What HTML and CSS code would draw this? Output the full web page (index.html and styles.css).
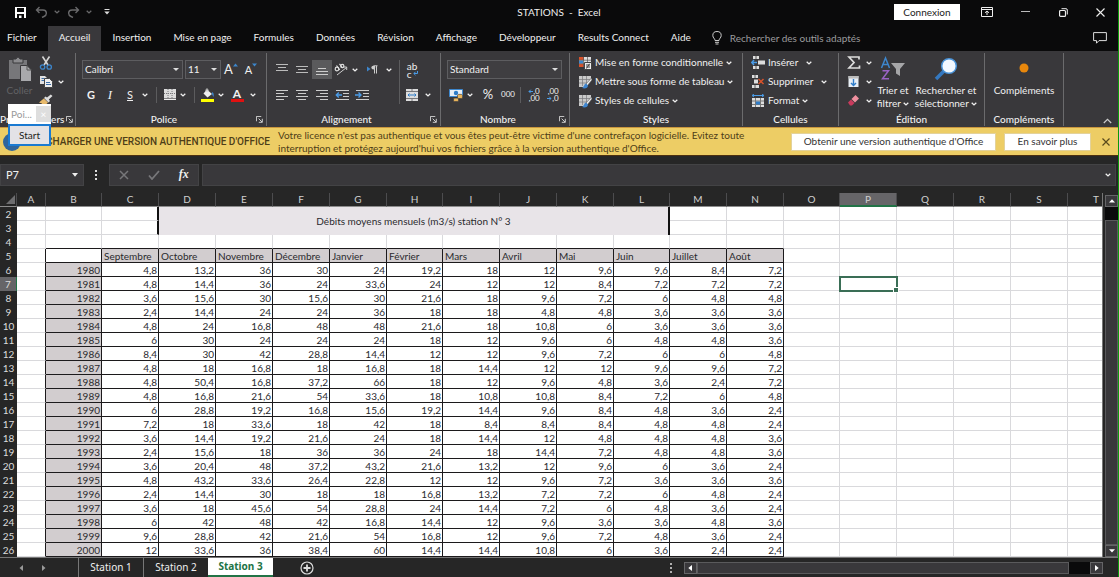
FILE: index.html
```html
<!DOCTYPE html>
<html lang="fr">
<head>
<meta charset="utf-8">
<title>STATIONS - Excel</title>
<link rel="stylesheet" href="styles.css">
</head>
<body>
<svg class="defs" aria-hidden="true">
  <symbol id="chev" viewBox="0 0 6 4"><path d="M.7 .7 3 2.9 5.3 .7" fill="none" stroke="currentColor" stroke-width="1.3"/></symbol>
  <symbol id="launch" viewBox="0 0 8 8"><path d="M.5 6V.5H6M3 3l4 4M7.2 3.2v4H3.2" fill="none" stroke="#e0e0e0"/></symbol>
  <symbol id="brushcell" viewBox="0 0 14 14"><path d="M1 1h12v3L7 12H1z" fill="#c9c9c9"/><path d="M1 4.500h11M1 8h8M4.500 1v10M8.500 1v8" stroke="#77777a" stroke-width=".7"/><path d="M13.500 3 8 9l1.500 1.500L14 5z" fill="#eee" stroke="#444" stroke-width=".5"/><path d="M8 8.500c-2 .5-1.500 3-4 4.500 3 1 6 0 6-2.500z" fill="#3f86d0"/></symbol>
</svg>
<div class="app">
  <header class="titlebar">
    <div class="quick">
      <button class="b w20" aria-label="Enregistrer"><svg width="13" height="13" viewBox="0 0 13 13"><path d="M1 1h11v11H1z" fill="#fff"/><path d="M3 2h7v4H3zM3 8h7v4H3z" fill="#0a0a0b"/><path d="M5 9.500h2.500V12H5z" fill="#fff"/></svg></button>
      <button class="b w24 dim" aria-label="Annuler"><svg width="13" height="12" viewBox="0 0 13 12"><path d="M4.500 1 1.500 4l3 3M1.500 4H8c4 0 4.500 5 1 6.500L7 11.500" fill="none" stroke="currentColor" stroke-width="1.400"/></svg></button>
      <button class="b w10 dim" aria-label="Options d'annulation"><svg class="chev"><use href="#chev"/></svg></button>
      <button class="b w24 dim" aria-label="Rétablir"><svg width="13" height="12" viewBox="0 0 13 12"><path d="M8.500 1l3 3-3 3M11.500 4H5C1 4 .5 9 4 10.500l2 1" fill="none" stroke="currentColor" stroke-width="1.400"/></svg></button>
      <button class="b w10 dim" aria-label="Options de rétablissement"><svg class="chev"><use href="#chev"/></svg></button>
      <button class="b w26" aria-label="Personnaliser"><svg width="6" height="6" viewBox="0 0 6 6"><path d="M.5 .5h5" stroke="#ddd"/><path d="M.3 2.500h5.400L3 5.500z" fill="#ddd"/></svg></button>
    </div>
    <div class="doc">STATIONS&nbsp; -&nbsp; Excel</div>
    <div class="win">
      <button class="connect">Connexion</button>
      <button class="b w38" aria-label="Affichage du ruban"><svg width="12" height="10" viewBox="0 0 12 10"><path d="M.5 .5h11v9H.5zM.5 2.500h11M6 8V4M4 5.800 6 4l2 1.800" fill="none" stroke="#eee"/></svg></button>
      <button class="b w38" aria-label="Réduire"><svg width="9" height="2"><path d="M0 .5h9" stroke="#bbb"/></svg></button>
      <button class="b w38" aria-label="Restaurer"><svg width="9" height="9" viewBox="0 0 9 9"><rect x=".6" y="2.500" width="5.900" height="5.900" rx="1" fill="none" stroke="#eee" stroke-width="1.200"/><path d="M2.500 .7h4.500q1.300 0 1.300 1.300v4.500" fill="none" stroke="#eee"/></svg></button>
      <button class="b w36" aria-label="Fermer"><svg width="9" height="9" viewBox="0 0 9 9"><path d="M.5.5l8 8M8.500.5l-8 8" stroke="#eee" stroke-width="1.100"/></svg></button>
    </div>
  </header>

  <nav class="tabs">
    <button>Fichier</button><button class="on">Accueil</button><button>Insertion</button><button>Mise en page</button><button>Formules</button><button>Données</button><button>Révision</button><button>Affichage</button><button>Développeur</button><button>Results Connect</button><button>Aide</button>
    <label class="tell"><svg width="10" height="14" viewBox="0 0 10 14"><path d="M3 9.500C3 7.500 .8 7 .8 4.500a4.200 4 0 0 1 8.400 0C9.200 7 7 7.500 7 9.500zM3 11.300h4M3.500 13h3" fill="none" stroke="#ccc"/></svg><input type="text" placeholder="Rechercher des outils adaptés"></label>
    <button class="comment" aria-label="Commentaires"><svg width="14" height="12" viewBox="0 0 14 12"><path d="M.6 .6h12.800v8H6L3.500 11.200V8.600H.6z" fill="none" stroke="#ddd"/></svg></button>
  </nav>

  <div class="ribbon">
    <section class="group g-clip">
      <div class="body">
        <button class="big paste"><svg width="24" height="26" viewBox="0 0 24 26"><path d="M1 4h18v19H1z" fill="#77777a"/><path d="M5 3h3q2-4 4 0h3v4H5z" fill="#8b8b8e" stroke="#39383b"/><path d="M12.500 9.500H19L23.500 14v11.500h-11z" fill="#a9a9ac" stroke="#39383b"/><path d="M19 9.500V14h4.500" fill="none" stroke="#555"/></svg><span>Coller</span></button>
        <div class="stack">
          <button class="item" aria-label="Couper"><svg width="14" height="14" viewBox="0 0 14 14"><path d="M3.500 .5 9 9M10.500 .5 5 9" stroke="#d6d6d6" stroke-width="1.600"/><circle cx="3.600" cy="11" r="2.200" fill="none" stroke="#3d86cc" stroke-width="1.300"/><circle cx="10.200" cy="11" r="2.200" fill="none" stroke="#3d86cc" stroke-width="1.300"/></svg></button>
          <button class="item" aria-label="Copier"><svg width="14" height="13" viewBox="0 0 14 13"><path d="M1 1h5l2 2v6H1z" fill="#e2e2e2"/><path d="M2.500 3.500h3M2.500 5.500h3" stroke="#3d6ea8"/><path d="M5.500 3.500h5l3 3v6h-8z" fill="#eee" stroke="#444"/><path d="M7 7.500h4M7 9.500h5" stroke="#3d6ea8"/></svg><svg class="chev"><use href="#chev"/></svg></button>
          <button class="item" aria-label="Reproduire la mise en forme"><svg width="14" height="13" viewBox="0 0 14 13"><path d="M13.500 2 11.800 .4 8 3.500 6.500 2.500 5 4l4.500 4.500L11 7 9.800 5.500z" fill="#ddd"/><path d="M4.800 4.500 0 8.500l3 1-.5 2L5 12.500l4-4z" fill="#e8ba6c"/></svg></button>
        </div>
      </div>
      <div class="cap"><span>Presse-papiers</span><button class="lb" aria-label="Options"><svg width="7" height="7"><use href="#launch"/></svg></button></div>
    </section>

    <section class="group g-font">
      <div class="body rows">
        <div class="row">
          <span class="sel s-font"><select aria-label="Police"><option>Calibri</option></select></span>
          <span class="sel s-size"><select aria-label="Taille"><option>11</option></select></span>
          <button class="b w20 grow" aria-label="Agrandir la police"><span>A</span><svg width="5" height="4"><path d="M0 3.500 2.500 .5 5 3.500z" fill="#3d86cc"/></svg></button>
          <button class="b w20 shrink" aria-label="Réduire la police"><span>A</span><svg width="5" height="4"><path d="M0 .5h5L2.500 3.500z" fill="#3d86cc"/></svg></button>
        </div>
        <div class="row">
          <button class="b w18"><b>G</b></button><button class="b w20 serif"><i>I</i></button><button class="b w20"><u>S</u></button><button class="b w10" aria-label="Soulignement"><svg class="chev"><use href="#chev"/></svg></button><span class="vs"></span>
          <button class="b w16" aria-label="Bordures"><svg width="12" height="11" viewBox="0 0 12 11"><path d="M0 0h12v9H0z" fill="#ddd"/><path d="M0 4.500h12M4 0v9M8 0v9" stroke="#77777a" stroke-dasharray="1 1"/><path d="M0 10.300h12" stroke="#eee" stroke-width="1.400"/></svg></button><button class="b w10" aria-label="Choix de bordure"><svg class="chev"><use href="#chev"/></svg></button><span class="vs"></span>
          <button class="b w16" aria-label="Remplissage"><svg width="14" height="14" viewBox="0 0 14 14"><path d="M6 1.500 11 6 6.500 9.500 2.500 5.500z" fill="#eee"/><path d="M5 4V1.500Q6 0 7 1.500V4" fill="none" stroke="#ccc"/><path d="M11 4q2.500 1 1.500 5L10.800 6z" fill="#3d86cc"/><path d="M0 11h13v3H0z" fill="#ffff00"/></svg></button><button class="b w10" aria-label="Couleur de remplissage"><svg class="chev"><use href="#chev"/></svg></button>
          <button class="b w22 ink"><b>A</b></button><button class="b w10" aria-label="Couleur de police"><svg class="chev"><use href="#chev"/></svg></button>
        </div>
      </div>
      <div class="cap"><span>Police</span><button class="lb" aria-label="Options de police"><svg width="7" height="7"><use href="#launch"/></svg></button></div>
    </section>

    <section class="group g-align">
      <div class="body cols">
        <div class="rows left">
          <div class="row">
            <button class="b w20" aria-label="Aligner en haut"><svg width="12" height="11"><path d="M0 .5h12M2 3.500h8M0 6.500h12" stroke="#bbb"/></svg></button>
            <button class="b w20" aria-label="Aligner au centre"><svg width="12" height="11"><path d="M0 2.500h12M2 5.500h8M0 8.500h12" stroke="#bbb"/></svg></button>
            <button class="b w20 pressed" aria-label="Aligner en bas"><svg width="12" height="11"><path d="M2 4.500h8M0 7.500h12M0 10.500h12" stroke="#ccc"/></svg></button>
            <button class="b w18" aria-label="Orientation"><svg width="14" height="13" viewBox="0 0 14 13"><path d="M3 12 12.500 4.500M9.500 4h3.200v3" fill="none" stroke="#ccc"/><circle cx="3" cy="6" r="1.800" fill="none" stroke="#ddd" stroke-width="1.200"/><path d="M2.500 2.500 5.800 7M5.500 .8 8.500 5" stroke="#ddd" stroke-width="1.200"/><circle cx="8.300" cy="3" r="1.600" fill="none" stroke="#ddd" stroke-width="1.200"/></svg></button><button class="b w10" aria-label="Choix d'orientation"><svg class="chev"><use href="#chev"/></svg></button>
            <button class="b w24" aria-label="Sens du texte"><svg width="11" height="9" viewBox="0 0 11 9"><path d="M0 1.500v5L3.500 4z" fill="#3d86cc"/><path d="M6.500 .8h4M7.500 1v7.500M9.500 1v7.500" stroke="#ccc"/><circle cx="6.300" cy="2.600" r="1.900" fill="#ccc"/></svg></button><button class="b w10" aria-label="Choix du sens"><svg class="chev"><use href="#chev"/></svg></button>
          </div>
          <div class="row">
            <button class="b w20" aria-label="Aligner à gauche"><svg width="12" height="11"><path d="M0 1.500h12M0 4.500h8M0 7.500h12M0 10.500h8" stroke="#ccc"/></svg></button>
            <button class="b w20" aria-label="Centrer"><svg width="12" height="11"><path d="M0 1.500h12M2 4.500h8M0 7.500h12M2 10.500h8" stroke="#ccc"/></svg></button>
            <button class="b w20" aria-label="Aligner à droite"><svg width="12" height="11"><path d="M0 1.500h12M4 4.500h8M0 7.500h12M4 10.500h8" stroke="#ccc"/></svg></button>
            <button class="b w20" aria-label="Diminuer le retrait"><svg width="14" height="12"><path d="M1 1.500h13M8 4.500h6M8 7.500h6M1 10.500h13" stroke="#ccc"/><path d="M7 6H1.500M3.800 3.500 1.300 6l2.500 2.500" fill="none" stroke="#4a9be6" stroke-width="1.400"/></svg></button>
            <button class="b w20" aria-label="Augmenter le retrait"><svg width="14" height="12"><path d="M1 1.500h13M8 4.500h6M8 7.500h6M1 10.500h13" stroke="#ccc"/><path d="M0 6h5.500M3.500 3.500 6 6 3.500 8.500" fill="none" stroke="#4a9be6" stroke-width="1.400"/></svg></button>
          </div>
        </div>
        <span class="tall"></span>
        <div class="rows">
          <div class="row"><button class="b w16 wrap" aria-label="Renvoyer à la ligne"><span>ab<br>c</span><svg width="5" height="5"><path d="M4.500 0v2.500H1M2.500 .8.8 2.500l1.700 1.700" fill="none" stroke="#4a9be6"/></svg></button></div>
          <div class="row"><button class="b w16" aria-label="Fusionner"><svg width="12" height="12" viewBox="0 0 12 12"><path d="M0 0h12v12H0z" fill="#ddd"/><path d="M0 2.500h12M0 9.500h12M6 0v2.500M6 9.500V12" stroke="#77777a"/><path d="M2 6h8M3.500 4.500 2 6l1.500 1.500M8.500 4.500 10 6 8.500 7.500" fill="none" stroke="#2f7cc8"/></svg></button><button class="b w16" aria-label="Choix de fusion"><svg class="chev"><use href="#chev"/></svg></button></div>
        </div>
      </div>
      <div class="cap"><span>Alignement</span><button class="lb" aria-label="Options d'alignement"><svg width="7" height="7"><use href="#launch"/></svg></button></div>
    </section>

    <section class="group g-num">
      <div class="body rows">
        <div class="row"><span class="sel s-num"><select aria-label="Format de nombre"><option>Standard</option></select></span></div>
        <div class="row">
          <button class="b w18" aria-label="Format monétaire"><svg width="14" height="14" viewBox="0 0 14 14"><path d="M.5 1.500h13v7H.5z" fill="#e8eef5" stroke="#3d86cc"/><circle cx="7" cy="5" r="2.200" fill="#2f7cc8"/><path d="M8.500 7.200c0-1.200 5-1.200 5 0v2.500c0 1.200-5 1.200-5 0zM4.500 11c0-1.200 5-1.200 5 0v1.700c0 1.200-5 1.200-5 0z" fill="#e9b45a" stroke="#39383b" stroke-width=".6"/></svg></button><button class="b w10" aria-label="Choix de devise"><svg class="chev"><use href="#chev"/></svg></button>
          <button class="b w26 pct">%</button><button class="b w14 mil">000</button><span class="vs s10"></span>
          <button class="b w18 dec" aria-label="Ajouter une décimale"><span><svg width="5" height="5"><path d="M5 2.500H1M2.800 .7 1 2.500l1.800 1.800" fill="none" stroke="#4a9be6"/></svg>,0<br>,00</span></button>
          <button class="b w20 dec" aria-label="Réduire les décimales"><span>,00<br><svg width="5" height="5"><path d="M0 2.500h4M2.200 .7 4 2.500 2.200 4.300" fill="none" stroke="#4a9be6"/></svg>,0</span></button>
        </div>
      </div>
      <div class="cap"><span>Nombre</span><button class="lb" aria-label="Options de nombre"><svg width="7" height="7"><use href="#launch"/></svg></button></div>
    </section>

    <section class="group g-styles">
      <div class="body stack">
        <button class="item"><svg width="14" height="14" viewBox="0 0 14 14"><path d="M1 1h12v10H1z" fill="#ddd"/><path d="M1 1h5v3H1zM1 8h5v3H1z" fill="#d9532c"/><path d="M1 4.500h4v3H1z" fill="#3d86cc"/><path d="M1 4.200h12M1 7.700h12M5.500 1v10M9.500 1v10" stroke="#555" stroke-width=".7"/><path d="M6.500 6.500h7v7h-7z" fill="#eee" stroke="#444"/><path d="M8 9h4M8 11h4M11.500 7.800 8.500 12.500" stroke="#444"/></svg>Mise en forme conditionnelle<svg class="chev"><use href="#chev"/></svg></button>
        <button class="item"><svg width="14" height="14"><use href="#brushcell"/></svg>Mettre sous forme de tableau<svg class="chev"><use href="#chev"/></svg></button>
        <button class="item"><svg width="14" height="14"><use href="#brushcell"/></svg>Styles de cellules<svg class="chev"><use href="#chev"/></svg></button>
      </div>
      <div class="cap"><span>Styles</span></div>
    </section>

    <section class="group g-cells">
      <div class="body stack">
        <button class="item far"><svg width="14" height="13" viewBox="0 0 14 13"><path d="M2 0h6v3H2zM2 10h6v3H2zM7 4.500h7v4H7z" fill="#ddd"/><path d="M5 0v3M5 10v3" stroke="#555"/><path d="M6 6.500H1M3 4 .7 6.500 3 9" fill="none" stroke="#4a9be6" stroke-width="1.500"/></svg>Insérer<svg class="chev"><use href="#chev"/></svg></button>
        <button class="item far"><svg width="14" height="13" viewBox="0 0 14 13"><path d="M1 0h6v3H1zM1 10h7v3H1zM3 4.500h4v4H3z" fill="#ddd"/><path d="M4 0v3M4 10v3" stroke="#555"/><path d="M7.500 4l5 5M12.500 4l-5 5" stroke="#d9532c" stroke-width="1.500"/></svg>Supprimer<svg class="chev"><use href="#chev"/></svg></button>
        <button class="item"><svg width="14" height="13" viewBox="0 0 14 13"><path d="M1.500 1.500h11M3 0 1 1.500 3 3M11 0l2 1.500L11 3" fill="none" stroke="#4a9be6"/><path d="M1 4h12v9H1z" fill="#ddd"/><path d="M1 7h12M1 10.500h12M4.500 4v9M9.500 4v9" stroke="#777"/><path d="M5 7.500h4v3H5z" fill="#2f7cc8"/></svg>Format<svg class="chev"><use href="#chev"/></svg></button>
      </div>
      <div class="cap"><span>Cellules</span></div>
    </section>

    <section class="group g-edit">
      <div class="body">
        <div class="stack">
          <button class="item" aria-label="Somme"><svg width="14" height="13" viewBox="0 0 14 13"><path d="M12 3.500V1H2l5 5.500L2 12h10.500V9.500" fill="none" stroke="#ddd" stroke-width="1.700"/></svg><svg class="chev"><use href="#chev"/></svg></button>
          <button class="item" aria-label="Recopier"><svg width="14" height="13" viewBox="0 0 14 13"><path d="M1.500 1h10v11h-10z" fill="#e8eef5"/><path d="M1.500 1h10v2.500h-10z" fill="#bbb"/><path d="M6.500 4v6.500M4 8l2.500 2.500L9 8" fill="none" stroke="#2f7cc8" stroke-width="1.400"/></svg><svg class="chev"><use href="#chev"/></svg></button>
          <button class="item" aria-label="Effacer"><svg width="14" height="13" viewBox="0 0 14 13"><path d="M1 8.500 4 5.500 7.500 9 5 11.500H3z" fill="#c93a5d"/><path d="M4.500 5 8.500 1 12 4.500 8 8.500z" fill="#f0909f"/></svg><svg class="chev"><use href="#chev"/></svg></button>
        </div>
        <button class="big sort"><svg width="26" height="26" viewBox="0 0 26 26"><path d="M1.500 12 5.500 2l4 10M3 8.500h5" fill="none" stroke="#3d86cc" stroke-width="1.500"/><path d="M2.500 14.800h6l-6 8h6.500" fill="none" stroke="#9a63c4" stroke-width="1.500"/><path d="M11 7h14l-5 6v7l-4-2.500V13z" fill="#a6a6a8"/></svg><span>Trier et<br>filtrer <svg class="chev"><use href="#chev"/></svg></span></button>
        <button class="big find"><svg width="24" height="26" viewBox="0 0 24 26"><path d="M10 15 2 23" stroke="#3478c0" stroke-width="3.500"/><circle cx="15" cy="10" r="7.300" fill="#f2f8ff" stroke="#4a93d8" stroke-width="1.500"/></svg><span>Rechercher et<br>sélectionner <svg class="chev"><use href="#chev"/></svg></span></button>
      </div>
      <div class="cap"><span>Édition</span></div>
    </section>

    <section class="group g-add">
      <div class="body"><button class="big addin"><svg width="24" height="26" viewBox="0 0 24 26"><circle cx="12" cy="12" r="4.500" fill="#e8870c"/></svg><span>Compléments</span></button></div>
      <div class="cap"><span>Compléments</span></div>
    </section>
    <button class="fold" aria-label="Réduire le ruban"><svg width="9" height="6"><path d="M.8 5 4.500 1.300 8.200 5" fill="none" stroke="#ccc" stroke-width="1.200"/></svg></button>
  </div>

  <div class="notice">
    <svg class="info" width="20" height="20" viewBox="0 0 20 20"><circle cx="10" cy="10" r="9" fill="#2f659c"/><path d="M10 8v6M10 5v1.500" stroke="#fff" stroke-width="1.500"/></svg>
    <strong>TÉLÉCHARGER UNE VERSION AUTHENTIQUE D'OFFICE</strong>
    <p>Votre licence n'est pas authentique et vous êtes peut-être victime d'une contrefaçon logicielle. Evitez toute interruption et protégez aujourd'hui vos fichiers grâce à la version authentique d'Office.</p>
    <button class="act get">Obtenir une version authentique d'Office</button>
    <button class="act more">En savoir plus</button>
    <button class="shut" aria-label="Fermer le message"><svg width="8" height="8"><path d="M.5.5l7 7M7.500.5l-7 7" stroke="#5a4a1c" stroke-width="1.200"/></svg></button>
    <div class="popup">
      <div class="ptitle"><span>Poi...</span><button aria-label="Fermer">×</button></div>
      <button class="start">Start</button>
    </div>
  </div>

  <div class="fbar">
    <div class="name"><input type="text" aria-label="Zone Nom" value="P7"><svg width="6" height="4"><path d="M0 0h6L3 3.800z" fill="#eee"/></svg></div>
    <svg class="dots" width="2" height="10"><path d="M0 1h2M0 5h2M0 9h2" stroke="#ddd" stroke-width="2"/></svg>
    <div class="fx">
      <button class="b" aria-label="Annuler la saisie"><svg width="10" height="10"><path d="M1 1l8 8M9 1 1 9" stroke="#77777a" stroke-width="1.500"/></svg></button>
      <button class="b" aria-label="Valider"><svg width="12" height="10"><path d="M1 5.500 4 9 11 1" fill="none" stroke="#77777a" stroke-width="1.800"/></svg></button>
      <button class="b fn"><i>fx</i></button>
    </div>
    <div class="formula"><input type="text" aria-label="Formule"><svg class="chev"><use href="#chev"/></svg></div>
  </div>

  <main class="work">
    <div class="sheet"><table id="grid"></table></div>
    <div class="vbar">
      <button aria-label="Défiler vers le haut"><svg width="6" height="4"><path d="M0 3.500h6L3 .3z" fill="#fff"/></svg></button>
      <span class="vgap"></span><span class="vthumb"></span>
      <button aria-label="Défiler vers le bas"><svg width="6" height="4"><path d="M0 .3h6L3 3.600z" fill="#fff"/></svg></button>
    </div>
  </main>

  <footer class="foot">
    <button class="arr first" aria-label="Feuille précédente"><svg width="4" height="6"><path d="M4 0v6L.5 3z" fill="#999"/></svg></button>
    <button class="arr" aria-label="Feuille suivante"><svg width="4" height="6"><path d="M0 0v6l3.500-3z" fill="#999"/></svg></button>
    <div class="sheets"><button>Station 1</button><button>Station 2</button><button class="on">Station 3</button></div>
    <button class="plus" aria-label="Nouvelle feuille"><svg width="14" height="14"><circle cx="7" cy="7" r="6" fill="none" stroke="#ddd" stroke-width="1.200"/><path d="M7 3.500v7M3.500 7h7" stroke="#ddd" stroke-width="1.800"/></svg></button>
    <svg class="dots" width="2" height="10"><path d="M0 1h2M0 5h2M0 9h2" stroke="#ddd" stroke-width="1.500"/></svg>
    <div class="hbar">
      <button aria-label="Défiler à gauche"><svg width="4" height="6"><path d="M4 0v6L.3 3z" fill="#fff"/></svg></button>
      <span class="hthumb"></span><span class="hgap"></span>
      <button aria-label="Défiler à droite"><svg width="4" height="6"><path d="M0 0v6l3.700-3z" fill="#fff"/></svg></button>
    </div>
  </footer>
</div>
<script src="grid.js"></script>
</body>
</html>
```
FILE: styles.css
```css
* { box-sizing: border-box; }
body { margin: 0; background: #0a0a0b; font: 10px/13px Lato, "Noto Sans", sans-serif; color: #f0f0f0; }
button, input, select { font: inherit; color: inherit; background: none; border: 0; padding: 0; margin: 0; border-radius: 0; }
input, select { min-width: 0; outline: 0; }
svg { display: block; flex: none; }
.defs { width: 0; height: 0; position: absolute; }
.app { height: 100vh; display: flex; flex-direction: column; border-right: 1px solid #0a9a0a; overflow: hidden; }
.chev { width: 6px; height: 4px; display: inline-block; }

.b { height: 19px; display: flex; align-items: center; justify-content: center; flex: none; }
.w10 { width: 10px; } .w14 { width: 14px; } .w16 { width: 16px; } .w18 { width: 18px; } .w20 { width: 20px; }
.w22 { width: 22px; } .w24 { width: 24px; } .w26 { width: 26px; } .w36 { width: 36px; } .w38 { width: 38px; }
.dim { color: #69696b; }

.titlebar { display: grid; grid-template-columns: 1fr auto 1fr; align-items: center; height: 24px; flex: none; }
.quick { display: flex; padding-left: 10px; }
.quick .w24 { width: 22px; }
.win { display: flex; justify-content: flex-end; align-items: center; }
.connect { background: #fff; color: #222; width: 66px; height: 16px; margin-right: 8px; }

.tabs { display: flex; height: 27px; flex: none; }
.tabs button { padding: 0 11px; white-space: nowrap; }
.tabs button:first-child { padding-left: 7px; }
.tabs .on { background: #39383b; margin: 2px 0 0; padding-bottom: 2px; }
.tell { display: flex; align-items: center; gap: 8px; padding-left: 10px; flex: 1; }
.tell input { flex: 1; height: 19px; }
.tell input::placeholder { color: #9c9c9e; opacity: 1; }

.ribbon { display: flex; background: #39383b; height: 76px; padding: 2px 0 1px; flex: none; }
.group { display: flex; flex-direction: column; border-right: 1px solid #6b6b6d; flex: none; }
.body { flex: 1; display: flex; }
.body.rows, .body.stack, .rows, .stack { display: flex; flex-direction: column; }
.rows { gap: 6px; }
.body.rows, .body.cols { padding-top: 7px; }
.row { display: flex; align-items: center; height: 19px; }
.item { display: flex; align-items: center; gap: 3px; height: 19px; white-space: nowrap; }
.item.far .chev { margin-left: 5px; }
.g-edit .item .chev, .g-clip .item .chev { margin-left: 2px; }
.cap { display: flex; align-items: center; height: 13px; }
.cap span { flex: 1; text-align: center; white-space: nowrap; font-weight: 500; }
.lb { width: 14px; display: flex; justify-content: center; }
.vs { width: 12px; height: 16px; background: linear-gradient(#5c5c5e, #5c5c5e) center / 1px 100% no-repeat; flex: none; }
.vs.s10 { width: 10px; }
.tall { width: 10px; height: 44px; background: linear-gradient(#5c5c5e, #5c5c5e) center / 1px 100% no-repeat; }
.big { display: flex; flex-direction: column; align-items: center; padding: 3px 0 0; }
.big span { padding-top: 2px; white-space: nowrap; }
.big .chev { vertical-align: 1px; }

.g-clip { width: 76px; }
.g-clip .paste { width: 39px; color: #626265; }
.g-font { width: 191px; } .g-font .body { padding-left: 6px; }
.g-align { width: 174px; } .g-align .body { padding-left: 5px; }
.g-align .left { width: 122px; }
.g-num { width: 129px; } .g-num .body { padding-left: 6px; }
.g-styles { width: 173px; } .g-styles .body { padding-left: 8px; }
.g-cells { width: 96px; } .g-cells .body { padding-left: 8px; }
.g-edit { width: 146px; } .g-edit .body { padding-left: 8px; }
.g-add { width: 79px; } .g-add .body { justify-content: center; }
.sort { width: 42px; } .find { width: 64px; }

.sel { position: relative; display: block; height: 19px; border: 1px solid #5d5d60; background: #3f3e41; }
.sel select { appearance: none; width: 100%; height: 17px; padding-left: 2px; }
.sel::after { content: ""; position: absolute; right: 3px; top: 7px; border: 3px solid transparent; border-top-color: #ddd; border-bottom: 0; pointer-events: none; }
.s-font { width: 101px; margin-right: 2px; } .s-size { width: 36px; } .s-num { width: 115px; }
.grow span { font-size: 13px; } .shrink span { font-size: 11px; }
.grow, .shrink { align-items: flex-start; padding-top: 3px; }
.serif { font-family: "Liberation Serif", serif; font-size: 13px; }
.row b, .row u { font-size: 11px; }
.ink b { border-bottom: 3px solid #e01010; width: 13px; line-height: 11px; font-size: 12px; }
.pressed { background: #5a5a5c; }
.wrap { font-size: 10px; line-height: 8px; position: relative; text-align: left; }
.wrap svg { position: absolute; right: 2px; bottom: 3px; }
.pct { font-size: 13px; } .mil { font-size: 8px; }
.dec { font-size: 8px; line-height: 7px; text-align: right; }
.dec svg { display: inline-block; }
.fold { margin-left: auto; align-self: flex-end; padding: 0 6px 2px 0; }

.notice { position: relative; display: flex; align-items: center; height: 28px; background: #edcd65; border-top: 1px solid #c9973e; color: #4d3d18; flex: none; }
.info { margin-left: 2px; }
.notice strong { width: 248px; display: flex; justify-content: flex-end; font: 500 10px/13px Roboto, sans-serif; white-space: nowrap; }
.notice p { margin: 0 auto 0 8px; max-width: 480px; }
.act { background: #fff; color: #333; height: 18px; border: 1px solid #e3d29b; white-space: nowrap; flex: none; }
.get { width: 205px; } .more { width: 87px; margin: 0 11px 0 8px; }
.shut { padding-right: 8px; }
.popup { position: absolute; left: 8px; top: -24px; width: 43px; background: #fff; }
.ptitle { display: flex; height: 20px; color: #999; padding-left: 3px; align-items: center; justify-content: space-between; }
.ptitle button { width: 15px; height: 16px; background: #dedede; color: #fff; }
.start { display: block; width: 43px; height: 22px; background: #e3e2e6; color: #222; border: 2px solid #1a7ad2; }

.fbar { display: flex; align-items: center; height: 38px; background: #262626; border-top: 1px solid #4d3010; flex: none; }
.fbar > div { height: 22px; background: #39383b; border: 1px solid #434345; display: flex; align-items: center; }
.name { width: 84px; padding: 0 5px; }
.name input { flex: 1; font-size: 11px; }
.dots { margin: 0 12px 0 11px; }
.fx { width: 90px; justify-content: space-around; margin-right: 3px; }
.fn { font: bold 12px "Liberation Serif", serif; }
.formula { flex: 1; padding: 0 4px; margin-right: 2px; }
.formula input { flex: 1; }

.work { flex: 1; min-height: 0; display: flex; background: #262626; }
.sheet { flex: 1; min-width: 0; overflow: hidden; background: #fff; border-right: 1px solid #777; }
table { table-layout: fixed; width: 0; border-spacing: 0; color: #2a2a2e; }
.c-head { width: 17px; } .c-a { width: 29px; } .c-56 { width: 56px; } .c-57 { width: 57px; }
th, td { height: 14px; padding: 0; line-height: 13px; font-weight: 400; white-space: nowrap; }
td { padding-top: 1px; line-height: 12px; }
thead th { background: #262626; color: #d0d0d0; border-right: 1px solid #4c4c4e; border-bottom: 1px solid #8c8c8c; }
thead th.sel-h { background: #666568; border-bottom: 2px solid #217346; line-height: 12px; }
.corner svg { margin-left: 6px; }
tbody th { background: #262626; color: #dcdcdc; text-align: center; }
tbody th.sel-h { background: #666568; border-right: 1px solid #217346; }
td { border-right: 1px solid #d9d9dc; border-bottom: 1px solid #d9d9dc; }
.v { border-color: #1c1a1c; text-align: right; padding-right: 1px; }
.m { border-color: #1c1a1c; background: #d2cdcf; padding-left: 2px; }
.y { background: #d2cdcf; }
.kb { border-bottom-color: #1c1a1c; } .kr { border-right-color: #1c1a1c; }
.thick { border-right: 2px solid #111; }
.banner { background: #e8e4e8; text-align: center; border-right: 2px solid #111; border-bottom: 0; padding: 0; }
.cursor { position: relative; outline: 2px solid #3a6e56; outline-offset: -1px; }
.cursor::after { content: ""; position: absolute; right: -3px; bottom: -3px; width: 4px; height: 4px; background: #3a6e56; border: 1px solid #fff; box-sizing: content-box; }

.vbar { width: 13px; margin: 2px 0 0 2px; display: flex; flex-direction: column; flex: none; }
.vbar button, .hbar button { display: flex; align-items: center; justify-content: center; width: 13px; height: 12px; border: 1px solid #656567; background: #39383b; flex: none; }
.vgap { height: 13px; background: #0a0a0b; }
.vthumb { flex: 1; background: #39383b; border: 1px solid #5a5a5c; }

.foot { display: flex; align-items: center; height: 20px; background: #262626; border-top: 1px solid #777; flex: none; }
.foot > .dots { margin: 0 12px 0 auto; }
.arr { width: 23px; display: flex; justify-content: center; }
.arr.first { margin-left: 9px; }
.sheets { display: flex; align-self: stretch; margin-left: 23px; font: 10px/15px "Noto Sans", sans-serif; }
.sheets button { width: 65px; border-left: 1px solid #777; }
.sheets .on { background: #fff; color: #217346; font-weight: 700; border-left: 0; border-bottom: 2px solid #217346; }
.plus { margin-left: 27px; }
.hbar { display: flex; width: 37.5%; margin-right: 15px; height: 12px; }
.hthumb { flex: 1; background: #39383b; border: 1px solid #5a5a5c; }
.hgap { width: 21px; background: #0a0a0b; }
```
FILE: grid.js
```
const months = ["Septembre", "Octobre", "Novembre", "Décembre", "Janvier", "Février", "Mars", "Avril", "Mai", "Juin", "Juillet", "Août"];
const flows = `4,8 13,2 36 30 24 19,2 18 12 9,6 9,6 8,4 7,2
4,8 14,4 36 24 33,6 24 12 12 8,4 7,2 7,2 7,2
3,6 15,6 30 15,6 30 21,6 18 9,6 7,2 6 4,8 4,8
2,4 14,4 24 24 36 18 18 4,8 4,8 3,6 3,6 3,6
4,8 24 16,8 48 48 21,6 18 10,8 6 3,6 3,6 3,6
6 30 24 24 24 18 12 9,6 6 4,8 4,8 3,6
8,4 30 42 28,8 14,4 12 12 9,6 7,2 6 6 4,8
4,8 18 16,8 18 16,8 18 14,4 12 12 9,6 9,6 7,2
4,8 50,4 16,8 37,2 66 18 12 9,6 4,8 3,6 2,4 7,2
4,8 16,8 21,6 54 33,6 18 10,8 10,8 8,4 7,2 6 4,8
6 28,8 19,2 16,8 15,6 19,2 14,4 9,6 8,4 4,8 3,6 2,4
7,2 18 33,6 18 42 18 8,4 8,4 8,4 4,8 4,8 2,4
3,6 14,4 19,2 21,6 24 18 14,4 12 4,8 4,8 4,8 3,6
2,4 15,6 18 36 36 24 18 14,4 7,2 4,8 4,8 3,6
3,6 20,4 48 37,2 43,2 21,6 13,2 12 9,6 6 3,6 2,4
4,8 43,2 33,6 26,4 22,8 12 12 9,6 7,2 3,6 3,6 3,6
2,4 14,4 30 18 18 16,8 13,2 7,2 7,2 6 4,8 2,4
3,6 18 45,6 54 28,8 24 14,4 7,2 6 4,8 3,6 2,4
6 42 48 42 16,8 14,4 12 9,6 3,6 3,6 4,8 3,6
9,6 28,8 42 21,6 54 16,8 12 9,6 7,2 4,8 3,6 2,4
12 33,6 36 38,4 60 14,4 14,4 10,8 6 3,6 2,4 2,4`.split("\n").map(line => line.split(" "));

const letters = [..."ABCDEFGHIJKLMNOPQRST"];
const narrow = "BHLO";
const td = (cls = "", text = "") => `<td class="${cls}">${text}</td>`;
const blanks = n => td().repeat(n);

let html = `<colgroup><col class="c-head"><col class="c-a">` +
  letters.slice(1).map(l => `<col class="${narrow.includes(l) ? "c-56" : "c-57"}">`).join("") + "</colgroup>";
html += `<thead><tr><th class="corner"><svg width="9" height="9"><path d="M9 0v9H0z" fill="#6e6e70"/></svg></th>` +
  letters.map(l => `<th class="${l === "P" ? "sel-h" : ""}">${l}</th>`).join("") + "</tr></thead><tbody>";

html += `<tr><th>2</th>${blanks(2)}${td("thick")}<td class="banner" colspan="9" rowspan="2">Débits moyens mensuels (m3/s) station N° 3</td>${blanks(8)}</tr>`;
html += `<tr><th>3</th>${blanks(2)}${td("thick")}${blanks(8)}</tr>`;
html += `<tr><th>4</th>${blanks(1)}${td("kb").repeat(13)}${blanks(6)}</tr>`;
html += `<tr><th>5</th>${td("kr")}${td("v")}${months.map(m => td("m", m)).join("")}${blanks(6)}</tr>`;
flows.forEach((row, i) => {
  const n = i + 6;
  html += `<tr><th class="${n === 7 ? "sel-h" : ""}">${n}</th>${td("kr")}${td("v y", 1980 + i)}${row.map(v => td("v", v)).join("")}` +
    (n === 7 ? blanks(1) + td("cursor") + blanks(4) : blanks(6)) + "</tr>";
});
document.getElementById("grid").innerHTML = html + "</tbody>";
```
